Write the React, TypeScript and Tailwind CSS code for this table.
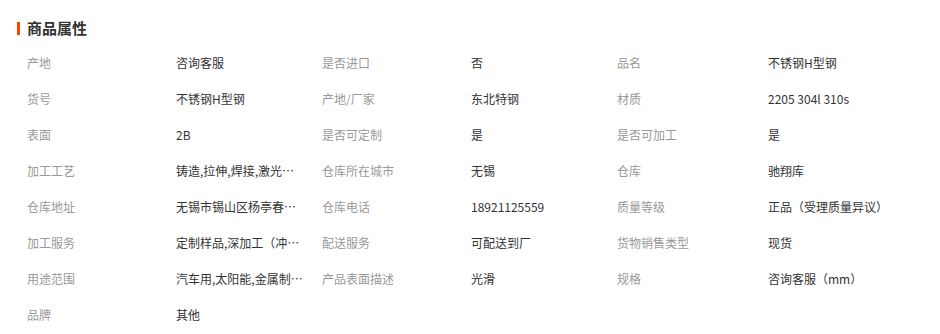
const rows: [string, string][][] = [
  [["产地", "咨询客服"], ["是否进口", "否"], ["品名", "不锈钢H型钢"]],
  [["货号", "不锈钢H型钢"], ["产地/厂家", "东北特钢"], ["材质", "2205 304l 310s"]],
  [["表面", "2B"], ["是否可定制", "是"], ["是否可加工", "是"]],
  [["加工工艺", "铸造,拉伸,焊接,激光切割,折弯"], ["仓库所在城市", "无锡"], ["仓库", "驰翔库"]],
  [["仓库地址", "无锡市锡山区杨亭春晖路"], ["仓库电话", "18921125559"], ["质量等级", "正品（受理质量异议）"]],
  [["加工服务", "定制样品,深加工（冲压）"], ["配送服务", "可配送到厂"], ["货物销售类型", "现货"]],
  [["用途范围", "汽车用,太阳能,金属制品,建筑"], ["产品表面描述", "光滑"], ["规格", "咨询客服（mm）"]],
  [["品牌", "其他"]],
];

export default function App() {
  return (
    <div
      className="w-[940px] h-[334px] bg-white overflow-hidden"
      style={{ fontFamily: '"Microsoft YaHei", "Noto Sans CJK SC", sans-serif' }}
    >
      <div className="flex items-center pl-[17px] pt-[18px] h-[38px]">
        <span className="w-[3px] h-[13px] bg-[#ff4400]" />
        <span className="ml-[7px] text-[15px] font-bold text-[#333] leading-[20px]">商品属性</span>
      </div>
      <div className="pl-[27px] pt-[7px]">
        {rows.map((row, i) => (
          <div key={i} className="grid grid-cols-[149px_146px_149px_146px_151px_1fr] h-[36px] items-center text-[12px]">
            {row.map(([k, v]) => (
              <div key={k} className="contents">
                <span className="text-[#999] truncate">{k}</span>
                <span className="text-[#333] w-[129px] truncate">{v}</span>
              </div>
            ))}
          </div>
        ))}
      </div>
    </div>
  );
}
